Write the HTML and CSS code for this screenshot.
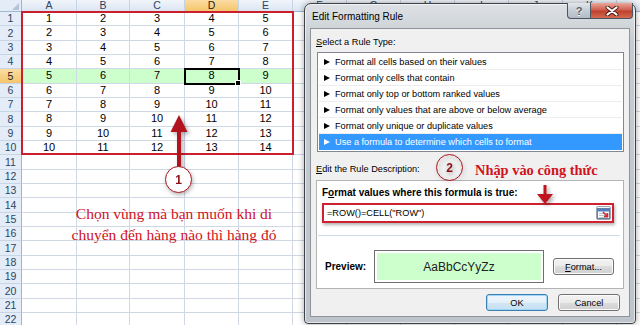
FILE: index.html
```html
<!DOCTYPE html>
<html lang="en">
<head>
  <meta charset="UTF-8" />
  <meta name="viewport" content="width=device-width, initial-scale=1.0" />
  <title>Edit Formatting Rule</title>
  <link rel="stylesheet" href="styles.css">
</head>
<body>
  <div class="screen">
    <div class="sheet" id="sheet"></div>

    <div class="range-box"></div>
    <svg class="arrow-up" width="22" height="56" viewBox="0 0 22 56">
      <path d="M10 2 L18.5 19 L12 19 L12 54 L8 54 L8 19 L1.5 19 Z" fill="#b3131c"/>
    </svg>
    <div class="badge badge-one">1</div>
    <p class="note note-one">Chọn vùng mà bạn muốn khi di<br>chuyển đến hàng nào thì hàng đó</p>

    <div class="dialog">
      <div class="titlebar">
        <span class="title">Edit Formatting Rule</span>
        <div class="caption-btns">
          <span class="btn-help">?</span>
          <span class="btn-close">
            <svg width="14" height="10" viewBox="0 0 14 10">
              <path d="M2.5 1.5 L11.5 8.5 M11.5 1.5 L2.5 8.5" stroke="#4a1a14" stroke-width="4" stroke-linecap="round"/>
              <path d="M2.5 1.5 L11.5 8.5 M11.5 1.5 L2.5 8.5" stroke="#fff" stroke-width="2.2" stroke-linecap="round"/>
            </svg>
          </span>
        </div>
      </div>

      <div class="client">
        <div class="label"><u>S</u>elect a Rule Type:</div>
        <ul class="rule-list">
          <li><i class="tri"></i>Format all cells based on their values</li>
          <li><i class="tri"></i>Format only cells that contain</li>
          <li><i class="tri"></i>Format only top or bottom ranked values</li>
          <li><i class="tri"></i>Format only values that are above or below average</li>
          <li><i class="tri"></i>Format only unique or duplicate values</li>
          <li class="selected"><i class="tri"></i>Use a formula to determine which cells to format</li>
        </ul>

        <div class="label desc-label"><u>E</u>dit the Rule Description:</div>
        <div class="desc-panel">
          <div class="desc-title">F<u>o</u>rmat values where this formula is true:</div>
          <div class="formula">
            <span>=ROW()=CELL("ROW")</span>
            <span class="ref-btn">
              <svg width="13" height="11" viewBox="0 0 13 11">
                <rect x="0.5" y="0.5" width="12" height="10" fill="#fff" stroke="#6b7f99"/>
                <rect x="1" y="1" width="11" height="2.5" fill="#4f7fc4"/>
                <path d="M2 5.5 H11 M2 7.5 H11 M2 9.5 H11" stroke="#b8c4d4" stroke-width="1"/>
                <path d="M6 4 L10.5 8.5 M10.5 5 V8.5 H7" stroke="#d6262e" stroke-width="1.6" fill="none"/>
              </svg>
            </span>
          </div>
          <div class="sep"></div>
          <div class="preview-row">
            <b class="preview-label">Preview:</b>
            <div class="preview-box">AaBbCcYyZz</div>
            <button class="btn btn-format"><u>F</u>ormat...</button>
          </div>
        </div>

        <div class="actions">
          <button class="btn btn-default">OK</button>
          <button class="btn">Cancel</button>
        </div>
      </div>
    </div>

    <div class="badge badge-two">2</div>
    <p class="note note-two">Nhập vào công thức</p>
    <svg class="arrow-down" width="20" height="22" viewBox="0 0 20 22">
      <path d="M8.5 1 L11.5 1 L11.5 10 L18 10 L10 20 L2 10 L8.5 10 Z" fill="#c0141e"/>
    </svg>
  </div>

  <script>
    const sheet = document.getElementById('sheet');
    const letters = 'ABCDEFGHIJK';

    function addCell(cls, text) {
      const d = document.createElement('div');
      d.className = cls;
      d.textContent = text;
      sheet.appendChild(d);
    }

    addCell('corner', '');
    for (let c = 0; c < 12; c++) {
      addCell(c === 3 ? 'col-head on' : 'col-head', letters[c] || '');
    }
    for (let r = 1; r <= 22; r++) {
      addCell(r === 5 ? 'row-head on' : 'row-head', r);
      for (let c = 0; c < 12; c++) {
        let cls = 'cell';
        if (r === 5 && c < 5) cls += ' hl';
        if (r === 5 && c === 3) cls += ' active';
        addCell(cls, r <= 10 && c < 5 ? r + c : '');
      }
    }
  </script>
</body>
</html>
```

FILE: styles.css
```css
body {
  margin: 0;
  background: #fff;
  font-family: "Liberation Sans", Arial, sans-serif;
}
.screen {
  position: relative;
  width: 640px;
  height: 325px;
  overflow: hidden;
}

/* spreadsheet */
.sheet {
  display: grid;
  grid-template-columns: 22px 55px 53px 55px 54px 54px repeat(7, 54px);
  grid-template-rows: 12px repeat(22, 14.33px);
  font-size: 11px;
  color: #000;
}
.sheet > div {
  box-sizing: border-box;
  border-right: 1px solid #d0d7e5;
  border-bottom: 1px solid #d0d7e5;
  display: flex;
  align-items: center;
  justify-content: center;
  line-height: 1;
}
.sheet .corner {
  position: relative;
  background: #e4ecf7;
  border-right-color: #9eb6ce;
  border-bottom-color: #9eb6ce;
}
.sheet .corner::after {
  content: "";
  position: absolute;
  right: 2px;
  bottom: 1px;
  border-left: 7px solid transparent;
  border-bottom: 7px solid #b4c3d6;
}
.sheet .col-head {
  align-items: flex-start;
  line-height: 10px;
  font-size: 10.5px;
  color: #2a4466;
  background: linear-gradient(#f1f5fa, #dbe5f2);
  border-right-color: #c5d3e4;
  border-bottom-color: #9eb6ce;
}
.sheet .row-head {
  font-size: 10.5px;
  color: #2a4466;
  background: #e4ecf7;
  border-right-color: #9eb6ce;
  border-bottom-color: #c8d5e5;
}
.sheet .on {
  background: linear-gradient(#fbdca3, #f4c56b);
  color: #222;
}
.sheet .hl {
  background: #ccffcc;
}
.sheet .active {
  position: relative;
  outline: 2px solid #000;
  outline-offset: -1px;
}
.sheet .active::after {
  content: "";
  position: absolute;
  right: -3px;
  bottom: -3px;
  width: 4px;
  height: 4px;
  background: #000;
  border: 1px solid #fff;
}

/* annotations */
.range-box {
  position: absolute;
  left: 21px;
  top: 11px;
  width: 273px;
  height: 144px;
  box-sizing: border-box;
  border: 2px solid #cc1f2d;
}
.arrow-up {
  position: absolute;
  left: 169px;
  top: 113px;
  filter: drop-shadow(2px 2px 2px rgba(0, 0, 0, 0.35));
}
.arrow-down {
  position: absolute;
  left: 535px;
  top: 184px;
  filter: drop-shadow(2px 2px 2px rgba(0, 0, 0, 0.35));
}
.badge {
  position: absolute;
  width: 27px;
  height: 27px;
  box-sizing: border-box;
  border: 1.5px solid #a8141c;
  border-radius: 50%;
  display: flex;
  align-items: center;
  justify-content: center;
  font-size: 12px;
  font-weight: bold;
  color: #8b0f14;
  filter: drop-shadow(1px 2px 2px rgba(0, 0, 0, 0.3));
}
.badge-one {
  left: 165px;
  top: 166px;
  background: #fff;
}
.badge-two {
  left: 436px;
  top: 154px;
}
.note {
  position: absolute;
  margin: 0;
  font-family: "Liberation Serif", "Times New Roman", serif;
  color: #d0121d;
}
.note-one {
  left: 54px;
  top: 203px;
  width: 240px;
  text-align: center;
  font-size: 15.5px;
  line-height: 21px;
}
.note-two {
  left: 475px;
  top: 160px;
  font-size: 14.4px;
  font-weight: bold;
  line-height: 20px;
}

/* dialog window */
.dialog {
  position: absolute;
  left: 304px;
  top: 3px;
  width: 332px;
  height: 321px;
  box-sizing: border-box;
  padding: 0 5px 6px;
  border: 1px solid #3e4246;
  border-radius: 7px 7px 4px 4px;
  background: linear-gradient(#dde1e5, #c6ccd2 40px, #bdc4cb);
  box-shadow: 0 0 6px rgba(0, 0, 0, 0.35), inset 0 0 0 1px rgba(255, 255, 255, 0.6);
  display: flex;
  flex-direction: column;
}
.titlebar {
  height: 24px;
  display: flex;
  justify-content: space-between;
  align-items: center;
}
.title {
  padding-left: 2px;
  font-size: 10px;
  color: #000;
}
.caption-btns {
  align-self: flex-start;
  margin-right: -3px;
  margin-top: -1px;
  display: flex;
}
.caption-btns span {
  height: 16px;
  box-sizing: border-box;
  border: 1px solid #4c545e;
  border-top: none;
  display: flex;
  align-items: center;
  justify-content: center;
}
.btn-help {
  width: 24px;
  border-radius: 0 0 0 4px;
  background: linear-gradient(#e3e7eb, #c5ccd4 50%, #b3bcc6);
  font-size: 11px;
  font-weight: bold;
  color: #555d66;
  text-shadow: 0 1px 0 #fff;
}
.btn-close {
  width: 42px;
  border-left: none !important;
  border-radius: 0 0 4px 0;
  background: linear-gradient(#e9a89c, #d0604f 45%, #c0412e 55%, #d46a52);
}

.client {
  height: 289px;
  box-sizing: border-box;
  padding: 7px 9px 0 5px;
  border: 1px solid #8d949b;
  background: #f0f0f0;
  font-size: 9.2px;
  color: #000;
}
.label {
  line-height: 13px;
}
.rule-list {
  list-style: none;
  margin: 3px 0 0 1px;
  padding: 1px;
  width: 307px;
  box-sizing: border-box;
  background: #fff;
  border: 1px solid #828790;
}
.rule-list li {
  height: 16px;
  box-sizing: border-box;
  padding-left: 5px;
  border-bottom: 1px solid #ededed;
  display: flex;
  align-items: center;
  gap: 5px;
}
.rule-list li.selected {
  background: #3399ff;
  color: #fff;
  border-bottom-color: #3399ff;
}
.tri {
  width: 0;
  height: 0;
  border-left: 6px solid #000;
  border-top: 3.5px solid transparent;
  border-bottom: 3.5px solid transparent;
}
.selected .tri {
  border-left-color: #fff;
}
.desc-label {
  margin-top: 11px;
}
.desc-panel {
  margin-top: 4px;
  width: 308px;
  height: 109px;
  box-sizing: border-box;
  padding: 6px 5px 5px;
  border: 1px solid #b4b4b4;
  background: #fff;
}
.desc-title {
  font-size: 10px;
  font-weight: bold;
  line-height: 12px;
}
.formula {
  margin-top: 4px;
  width: 292px;
  height: 20px;
  box-sizing: border-box;
  padding: 0 1px 0 3px;
  border: 2px solid #cf2230;
  box-shadow: 1px 2px 3px rgba(0, 0, 0, 0.3);
  display: flex;
  align-items: center;
  justify-content: space-between;
}
.ref-btn {
  width: 15px;
  height: 14px;
  box-sizing: border-box;
  border: 1px solid #9aa5b2;
  border-radius: 2px;
  background: linear-gradient(#f7f9fb, #dfe5ec);
  display: flex;
  align-items: center;
  justify-content: center;
}
.sep {
  margin: 12px 0 0 -4px;
  width: 302px;
  height: 1px;
  background: #cddcef;
}
.preview-row {
  margin-top: 14px;
  height: 33px;
  display: flex;
  align-items: center;
}
.preview-label {
  margin-left: 3px;
  width: 49px;
  font-size: 10px;
}
.preview-box {
  width: 170px;
  height: 33px;
  box-sizing: border-box;
  border: 1px solid #6f6f6f;
  box-shadow: inset 0 0 0 2px #fff;
  background: #ccffcc;
  display: flex;
  align-items: center;
  justify-content: center;
  font-size: 12px;
  color: #222;
}
.btn {
  height: 17px;
  padding: 0;
  box-sizing: border-box;
  border: 1px solid #707070;
  border-radius: 3px;
  background: linear-gradient(#f2f2f2, #ebebeb 50%, #dddddd 50%, #cfcfcf);
  box-shadow: inset 0 0 0 1px #fcfcfc;
  font-family: "Liberation Sans", Arial, sans-serif;
  font-size: 9.2px;
  color: #000;
}
.btn-format {
  margin-left: 9px;
  width: 61px;
}
.actions {
  margin-top: 5px;
  display: flex;
  justify-content: flex-end;
  gap: 10px;
}
.actions .btn {
  width: 62px;
}
.btn-default {
  border-color: #3c7fb1;
  box-shadow: inset 0 0 0 1px #9fd6f5;
  background: linear-gradient(#eef6fb, #e3f0f9 50%, #d2e7f5 50%, #c5dff2);
}
```
